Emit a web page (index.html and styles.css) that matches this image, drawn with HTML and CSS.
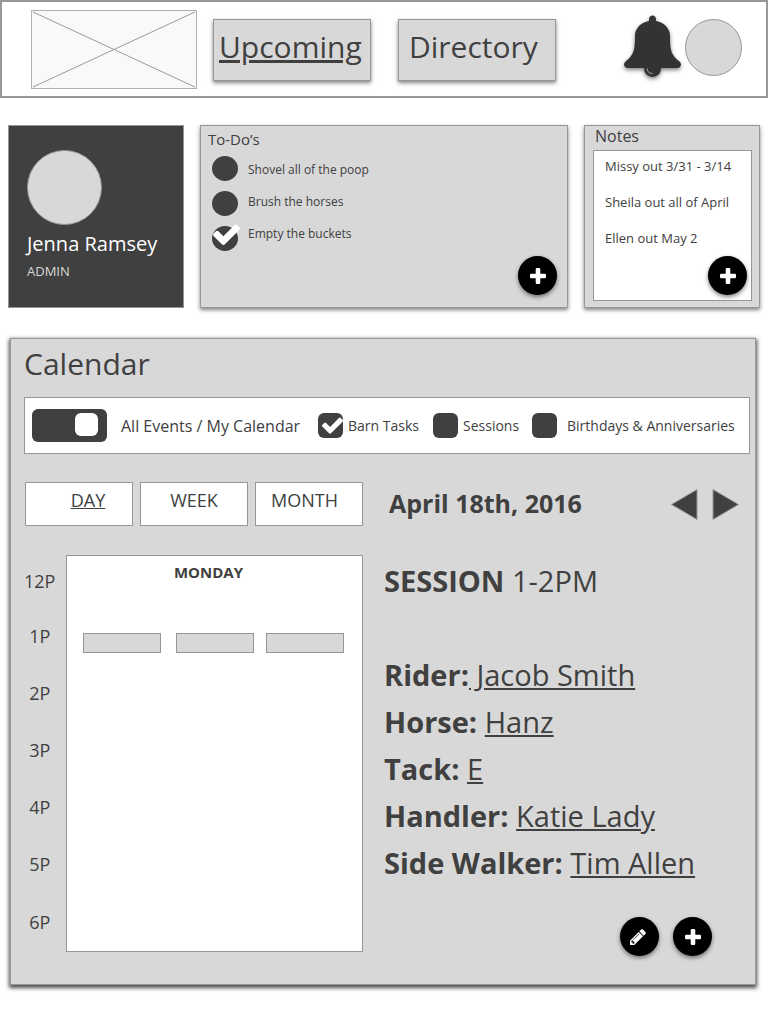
FILE: index.html
```html
<!DOCTYPE html>
<html lang="en">
<head>
<meta charset="utf-8">
<meta name="viewport" content="width=device-width, initial-scale=1">
<title>Upcoming</title>
<link rel="stylesheet" href="styles.css">
</head>
<body>
<svg class="sprite" aria-hidden="true">
  <symbol id="check" viewBox="121 309 1550 1213"><path d="M1671 566q0 40-28 68l-724 724-136 136q-28 28-68 28t-68-28l-136-136-362-362q-28-28-28-68t28-68l136-136q28-28 68-28t68 28l294 295 656-657q28-28 68-28t68 28l136 136q28 28 28 68z"/></symbol>
  <symbol id="plus" viewBox="0 0 16 16"><path d="M7 0h2q1.300 0 1.300 1.300V5.700h4.400Q16 5.700 16 7v2q0 1.300-1.300 1.300H10.300v4.400Q10.300 16 9 16H7q-1.300 0-1.300-1.300V10.300H1.300Q0 10.300 0 9V7q0-1.300 1.300-1.300H5.700V1.300Q5.700 0 7 0z"/></symbol>
  <symbol id="pencil" viewBox="128 128 1536 1536"><path d="M491 1536l91-91-235-235-91 91v107h128v128h107zm523-928q0-22-22-22-10 0-17 7l-542 542q-7 7-7 17 0 22 22 22 10 0 17-7l542-542q7-7 7-17zm-54-192l416 416-832 832h-416v-416zm683 96q0 53-37 90l-166 166-416-416 166-165q36-38 90-38 53 0 91 38l235 234q37 39 37 91z"/></symbol>
</svg>

<header class="topbar">
  <svg class="logo" viewBox="0 0 165 79" preserveAspectRatio="none" role="img" aria-label="Logo">
    <path d="M1 1L164 78M1 78L164 1"/>
  </svg>
  <nav class="nav">
    <a class="nav-link current" href="#upcoming">Upcoming</a>
    <a class="nav-link" href="#directory">Directory</a>
  </nav>
  <div class="account">
    <button class="bell" aria-label="Notifications">
      <svg viewBox="0 0 57 62">
        <circle cx="28.500" cy="53.500" r="8.500"/>
        <path d="M25 6V4Q25.500 .500 28.500 .500T32 4V6C40 7.500 46 13 46 21C46 36 47.500 40 55.500 46.500Q57 48 57 49.500Q56.500 53 53 53H4Q.500 53 0 49.500Q0 48 1.500 46.500C9.500 40 11 36 11 21C11 13 17 7.500 25 6z"/>
        <path class="glint" d="M23 53.500Q23.500 58.500 28.500 58.500"/>
      </svg>
    </button>
    <span class="avatar"></span>
  </div>
</header>

<main>
  <div class="cards">
    <section class="profile">
      <span class="portrait"></span>
      <h2 class="profile-name">Jenna Ramsey</h2>
      <p class="profile-role">ADMIN</p>
    </section>

    <section class="card todos">
      <h2 class="card-title">To-Do’s</h2>
      <div class="todo-list">
        <div class="todo-boxes">
          <input class="dot" type="checkbox" id="todo-1">
          <input class="dot" type="checkbox" id="todo-2">
          <span class="ticked"><input class="dot" type="checkbox" id="todo-3" checked><svg class="tick"><use href="#check"/></svg></span>
        </div>
        <div class="todo-labels">
          <label for="todo-1">Shovel all of the poop</label>
          <label for="todo-2">Brush the horses</label>
          <label for="todo-3">Empty the buckets</label>
        </div>
      </div>
      <button class="round card-add" aria-label="Add to-do"><svg><use href="#plus"/></svg></button>
    </section>

    <section class="card notes">
      <h2 class="card-title">Notes</h2>
      <ul class="note-list">
        <li>Missy out 3/31 - 3/14</li>
        <li>Sheila out all of April</li>
        <li>Ellen out May 2</li>
      </ul>
      <button class="round card-add" aria-label="Add note"><svg><use href="#plus"/></svg></button>
    </section>
  </div>

  <section class="calendar">
    <h1 class="calendar-title">Calendar</h1>
    <div class="filters">
      <input class="switch" type="checkbox" role="switch" id="mine" checked>
      <label class="switch-label" for="mine">All Events / My Calendar</label>
      <div class="filter">
        <span class="ticked"><input class="box" type="checkbox" id="tasks" checked><svg class="tick"><use href="#check"/></svg></span>
        <label for="tasks">Barn Tasks</label>
      </div>
      <div class="filter">
        <input class="box" type="checkbox" id="sessions">
        <label for="sessions">Sessions</label>
      </div>
      <div class="filter wide">
        <input class="box" type="checkbox" id="birthdays">
        <label for="birthdays">Birthdays &amp; Anniversaries</label>
      </div>
    </div>

    <div class="controls">
      <div class="views">
        <button class="view day current">DAY</button>
        <button class="view">WEEK</button>
        <button class="view month">MONTH</button>
      </div>
      <h2 class="date">April 18th, 2016</h2>
      <div class="arrows">
        <button class="arrow" aria-label="Previous day"><svg viewBox="0 0 27 31"><path d="M.500 15.500L26 .500V30.500z"/></svg></button>
        <button class="arrow" aria-label="Next day"><svg viewBox="0 0 27 31"><path d="M26.500 15.500L1 .500V30.500z"/></svg></button>
      </div>
    </div>

    <div class="schedule">
      <div class="hours">
        <span>12P</span><span>1P</span><span>2P</span><span>3P</span><span>4P</span><span>5P</span><span>6P</span>
      </div>
      <div class="day-column">
        <h3 class="weekday">MONDAY</h3>
        <div class="events">
          <button class="event" aria-label="Session 1"></button>
          <button class="event" aria-label="Session 2"></button>
          <button class="event" aria-label="Session 3"></button>
        </div>
      </div>
      <div class="details">
        <p class="session"><b>SESSION</b> 1-2PM</p>
        <p><b>Rider:</b><a href="#rider">&nbsp;Jacob Smith</a></p>
        <p><b>Horse:</b> <a href="#horse">Hanz</a></p>
        <p><b>Tack:</b> <a href="#tack">E</a></p>
        <p><b>Handler:</b> <a href="#handler">Katie Lady</a></p>
        <p><b>Side Walker:</b> <a href="#walker">Tim Allen</a></p>
        <div class="actions">
          <button class="round edit" aria-label="Edit session"><svg><use href="#pencil"/></svg></button>
          <button class="round" aria-label="Add session"><svg><use href="#plus"/></svg></button>
        </div>
      </div>
    </div>
  </section>
</main>
</body>
</html>
```
FILE: styles.css
```css
* {
  box-sizing: border-box;
}

body {
  margin: 0;
  background: #fff;
  color: #404040;
  font-family: "Open Sans", "Noto Sans", sans-serif;
}

h1, h2, h3, p, ul {
  margin: 0;
  padding: 0;
  font-weight: 400;
}

ul {
  list-style: none;
}

a {
  color: inherit;
}

button {
  padding: 0;
  border: 0;
  background: none;
  color: inherit;
  font: inherit;
}

input {
  appearance: none;
  margin: 0;
}

svg {
  display: block;
}

.sprite {
  position: absolute;
  width: 0;
  height: 0;
}

.topbar {
  display: flex;
  align-items: center;
  height: 98px;
  padding: 0 24px 0 29px;
  border: 2px solid #979797;
}

.logo {
  width: 166px;
  height: 79px;
  border: 1px solid #b0b0b0;
  background: #f9f9f9;
  fill: none;
  stroke: #979797;
}

.nav {
  display: flex;
  gap: 27px;
  margin-left: 16px;
  padding-top: 2px;
}

.nav-link {
  width: 158px;
  height: 62px;
  padding-left: 10px;
  border: 1px solid #979797;
  background: #d8d8d8;
  box-shadow: 0 2px 4px rgba(0, 0, 0, 0.5);
  font-size: 30px;
  line-height: 54px;
  text-decoration: none;
}

.nav-link.current {
  padding-left: 5px;
  text-decoration: underline;
}

.account {
  display: flex;
  align-items: center;
  gap: 4px;
  margin-left: auto;
  padding-bottom: 3px;
}

.bell svg {
  width: 57px;
  height: 62px;
  margin-bottom: 3px;
  fill: #333;
  filter: drop-shadow(0 2px 2px rgba(0, 0, 0, 0.5));
}

.bell .glint {
  fill: none;
  stroke: #aaa;
}

.avatar {
  width: 57px;
  height: 57px;
  border: 1px solid #979797;
  border-radius: 50%;
  background: #d8d8d8;
}

.cards {
  display: grid;
  grid-template-columns: 176px 1fr 176px;
  gap: 16px;
  min-height: 183px;
  margin: 27px 8px 0;
}

.profile {
  padding: 24px 18px;
  border: 1px solid #979797;
  background: #404040;
}

.portrait {
  display: block;
  width: 75px;
  height: 75px;
  border: 1px solid #979797;
  border-radius: 50%;
  background: #d8d8d8;
}

.profile-name {
  padding-top: 3px;
  color: #fff;
  font-size: 20px;
  line-height: 32px;
  white-space: nowrap;
}

.profile-role {
  color: #d8d8d8;
  font-size: 13px;
  line-height: 22px;
}

.card {
  position: relative;
  border: 1px solid #979797;
  background: #d8d8d8;
  box-shadow: 0 2px 4px rgba(0, 0, 0, 0.5);
}

.card-title {
  font-size: 15px;
  line-height: 20px;
}

.todos {
  padding: 3px 7px;
}

.todo-list {
  display: flex;
  gap: 10px;
  padding: 7px 4px 0;
}

.todo-boxes {
  display: flex;
  flex-direction: column;
  gap: 10px;
}

.todo-labels {
  display: flex;
  flex-direction: column;
  gap: 16px;
  padding-top: 6px;
  font-size: 12px;
  line-height: 16px;
}

.dot,
.box {
  display: block;
  width: 26px;
  height: 25px;
  border-radius: 50%;
  background: #404040;
}

.box {
  width: 25px;
  border-radius: 6px;
}

.ticked {
  position: relative;
}

.tick {
  position: absolute;
  top: -2px;
  left: 1px;
  width: 27px;
  height: 21px;
  fill: #fff;
  pointer-events: none;
}

.filter .tick {
  top: 4px;
  left: 4px;
  width: 21px;
  height: 17px;
}

.round {
  display: grid;
  place-items: center;
  width: 39px;
  height: 39px;
  border-radius: 50%;
  background: #000;
  box-shadow: 0 2px 4px rgba(0, 0, 0, 0.5);
}

.round svg {
  width: 16px;
  height: 16px;
  fill: #fff;
}

.round.edit {
  padding-right: 4px;
}

.card-add {
  position: absolute;
  right: 10px;
  bottom: 12px;
}

.notes {
  display: flex;
  flex-direction: column;
  padding: 0 7px 6px 8px;
}

.notes .card-add {
  right: 12px;
}

.notes .card-title {
  padding: 0 2px 4px;
  font-size: 16px;
}

.note-list {
  flex: 1;
  padding: 6px 11px;
  border: 1px solid #979797;
  background: #fff;
  font-size: 13px;
  line-height: 18px;
}

.note-list li {
  margin-bottom: 18px;
  white-space: nowrap;
}

.calendar {
  margin: 30px 12px 40px 10px;
  padding: 0 5px 28px 13px;
  border: 1px solid #979797;
  background: #d8d8d8;
  box-shadow: 0 2px 4px 1px rgba(0, 0, 0, 0.7);
}

.calendar-title {
  font-size: 30px;
  line-height: 50px;
}

.filters {
  display: grid;
  grid-template-columns: 89px 197px 115px 99px 1fr;
  align-items: center;
  height: 57px;
  margin: 8px 0 28px;
  padding-left: 7px;
  border: 1px solid #979797;
  background: #fff;
  font-size: 14px;
}

.switch {
  display: flex;
  justify-content: flex-end;
  width: 75px;
  height: 33px;
  padding: 4px 9px;
  border-radius: 6px;
  background: #404040;
}

.switch::after {
  content: "";
  width: 23px;
  height: 23px;
  border-radius: 6px;
  background: #fff;
}

.switch-label {
  font-size: 16px;
}

.filter {
  display: flex;
  align-items: center;
  gap: 5px;
}

.filter.wide {
  gap: 10px;
}

.controls {
  display: flex;
  align-items: center;
  padding: 0 11px 0 1px;
}

.views {
  display: flex;
  gap: 7px;
}

.view {
  width: 108px;
  height: 44px;
  padding-bottom: 8px;
  border: 1px solid #979797;
  background: #fff;
  font-size: 18px;
}

.view.day {
  padding-left: 18px;
}

.view.month {
  padding-right: 9px;
}

.view.current {
  text-decoration: underline;
}

.date {
  margin-left: 26px;
  padding-bottom: 2px;
  font-size: 25px;
  font-weight: 700;
}

.arrows {
  display: flex;
  gap: 14px;
  margin-left: auto;
}

.arrow svg {
  width: 27px;
  height: 31px;
  fill: #404040;
  stroke: #979797;
}

.schedule {
  display: grid;
  grid-template-columns: 30px 297px 1fr;
  align-items: start;
  column-gap: 12px;
  margin-top: 29px;
}

.hours,
.day-column {
  min-height: 397px;
}

.hours {
  display: grid;
  grid-template-rows: 52px repeat(5, 57px) 1fr;
  place-items: center;
  font-size: 18px;
}

.day-column {
  border: 1px solid #979797;
  background: #fff;
}

.weekday {
  padding: 4px 12px 0 0;
  font-size: 15px;
  font-weight: 700;
  line-height: 24px;
  text-align: center;
}

.events {
  display: grid;
  grid-template-columns: 93px 90px 78px;
  margin: 49px 16px 0;
}

.event {
  width: 78px;
  height: 20px;
  border: 1px solid #979797;
  background: #d8d8d8;
}

.details {
  padding: 2px 0 0 9px;
  font-size: 29px;
  line-height: 47px;
}

.session {
  margin-bottom: 47px;
}

.actions {
  display: flex;
  justify-content: flex-end;
  gap: 14px;
  padding: 31px 38px 0 0;
}
```
